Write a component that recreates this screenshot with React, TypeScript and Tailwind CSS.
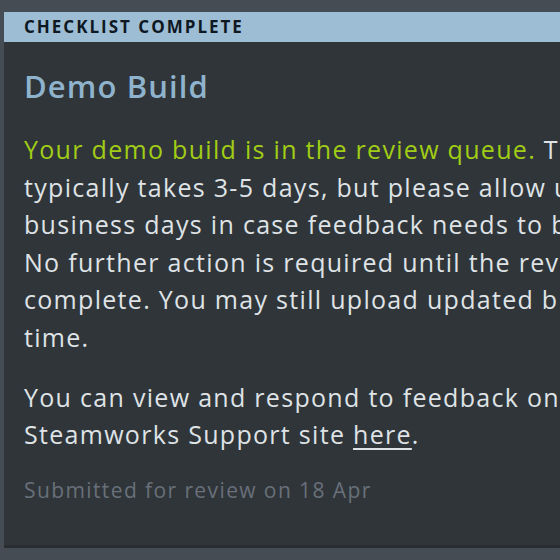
export default function App() {
  return (
    <div className="h-[560px] w-[560px] overflow-hidden bg-[#454c53] pl-1 pt-3 font-['Open_Sans',sans-serif]">
      <div className="w-[800px] border-b-[3px] border-[#2a2e33] bg-[#30353a]">
        <div className="flex h-[30px] items-center bg-[#9dbdd4] px-5">
          <span className="text-[17px] font-bold tracking-[2px] text-[#0d1823]">CHECKLIST COMPLETE</span>
        </div>
        <div className="px-5 pb-[40px] pt-[22px]">
          <h1 className="text-[31px] font-semibold leading-[44px] tracking-[1.1px] text-[#8fb3cc]">Demo Build</h1>
          <p className="mt-[23px] whitespace-nowrap text-[25px] font-medium leading-[37.6px] tracking-[1.3px] text-[#dfe3e6]">
            <span className="text-[#a1cd15]">Your demo build is in the review queue.</span> This
            <br />
            typically takes 3-5 days, but please allow up to 10
            <br />
            business days in case feedback needs to be addressed.
            <br />
            No further action is required until the review is
            <br />
            complete. You may still upload updated builds at any
            <br />
            time.
          </p>
          <p className="mt-[22px] whitespace-nowrap text-[25px] font-medium leading-[37.6px] tracking-[1.3px] text-[#dfe3e6]">
            You can view and respond to feedback on the
            <br />
            Steamworks Support site <span className="underline underline-offset-4">here</span>.
          </p>
          <p className="mt-[21px] text-[21px] leading-[30px] tracking-[1.4px] text-[#687079]">Submitted for review on 18 Apr</p>
        </div>
      </div>
    </div>
  );
}
